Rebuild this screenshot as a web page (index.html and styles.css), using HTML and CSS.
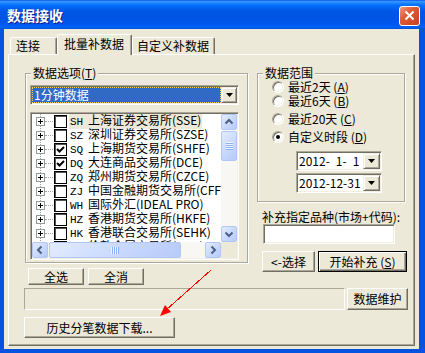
FILE: index.html
```html
<!DOCTYPE html>
<html lang="zh-CN">
<head>
  <meta charset="UTF-8" />
  <title>数据接收</title>
  <link rel="stylesheet" href="styles.css">
</head>
<body>
  <div class="window">
    <div class="titlebar">
      <span class="title">数据接收</span>
      <button class="close">
        <svg width="11" height="11" viewBox="0 0 11 11"><path d="M1.5 1.5 L9.5 9.5 M9.5 1.5 L1.5 9.5" stroke="#fff" stroke-width="2" fill="none"/></svg>
      </button>
    </div>

    <div class="frame">
      <div class="tabs">
        <div class="tab tab-first">连接</div>
        <div class="tab tab-active">批量补数据</div>
        <div class="tab tab-last">自定义补数据</div>
      </div>

      <div class="panel">
        <div class="upper">
          <div class="col-left">
            <div class="group group-options">
              <div class="group-title">数据选项(<u>T</u>)</div>
              <div class="combo">
                <div class="combo-value">1分钟数据</div>
                <div class="drop"><svg width="7" height="4" viewBox="0 0 7 4"><path d="M0 0 H7 L3.5 4 Z" fill="#000"/></svg></div>
              </div>

              <div class="list">
                <div class="tree">
                  <div class="node"><span class="exp"></span><span class="dots"></span><span class="check"></span><span class="label selected"><span class="code">SH</span>上海证券交易所(SSE)</span></div>
                  <div class="node"><span class="exp"></span><span class="dots"></span><span class="check"></span><span class="label"><span class="code">SZ</span>深圳证券交易所(SZSE)</span></div>
                  <div class="node"><span class="exp"></span><span class="dots"></span><span class="check"><svg width="11" height="11" viewBox="0 0 11 11"><path d="M2 5 L4.5 7.5 L9 3" stroke="#000" stroke-width="2" fill="none"/></svg></span><span class="label"><span class="code">SQ</span>上海期货交易所(SHFE)</span></div>
                  <div class="node"><span class="exp"></span><span class="dots"></span><span class="check"><svg width="11" height="11" viewBox="0 0 11 11"><path d="M2 5 L4.5 7.5 L9 3" stroke="#000" stroke-width="2" fill="none"/></svg></span><span class="label"><span class="code">DQ</span>大连商品交易所(DCE)</span></div>
                  <div class="node"><span class="exp"></span><span class="dots"></span><span class="check"></span><span class="label"><span class="code">ZQ</span>郑州期货交易所(CZCE)</span></div>
                  <div class="node"><span class="exp"></span><span class="dots"></span><span class="check"></span><span class="label"><span class="code">ZJ</span>中国金融期货交易所(CFFEX)</span></div>
                  <div class="node"><span class="exp"></span><span class="dots"></span><span class="check"></span><span class="label"><span class="code">WH</span>国际外汇(IDEAL PRO)</span></div>
                  <div class="node"><span class="exp"></span><span class="dots"></span><span class="check"></span><span class="label"><span class="code">HZ</span>香港期货交易所(HKFE)</span></div>
                  <div class="node"><span class="exp"></span><span class="dots"></span><span class="check"></span><span class="label"><span class="code">HK</span>香港联合交易所(SEHK)</span></div>
                  <div class="node"><span class="exp"></span><span class="dots"></span><span class="check"></span><span class="label"><span class="code">LM</span>伦敦金属交易所(LME)</span></div>
                </div>

                <div class="vscroll">
                  <div class="sb-btn"><svg width="14" height="14" viewBox="0 0 14 14"><polyline points="3.5,8.5 7,5 10.5,8.5" /></svg></div>
                  <div class="sb-thumb thumb-v"><span class="grip grip-v"></span></div>
                  <div class="sb-track"></div>
                  <div class="sb-btn"><svg width="14" height="14" viewBox="0 0 14 14"><polyline points="3.5,5.5 7,9 10.5,5.5" /></svg></div>
                </div>
                <div class="hscroll">
                  <div class="sb-btn"><svg width="14" height="14" viewBox="0 0 14 14"><polyline points="8.5,3.5 5,7 8.5,10.5" /></svg></div>
                  <div class="sb-thumb thumb-h"><span class="grip grip-h"></span></div>
                  <div class="sb-track"></div>
                  <div class="sb-btn"><svg width="14" height="14" viewBox="0 0 14 14"><polyline points="5.5,3.5 9,7 5.5,10.5" /></svg></div>
                </div>
                <div class="corner"></div>
              </div>
            </div>

            <div class="btn-row btn-row-left">
              <button class="btn btn-select">全选</button>
              <button class="btn btn-select">全消</button>
            </div>
          </div>

          <div class="col-right">
            <div class="group group-range">
              <div class="group-title">数据范围</div>
              <div class="radio-row"><span class="radio"></span>最近2天 (<u>A</u>)</div>
              <div class="radio-row"><span class="radio"></span>最近6天 (<u>B</u>)</div>
              <div class="radio-row gap"><span class="radio"></span>最近20天 (<u>C</u>)</div>
              <div class="radio-row gap"><span class="radio"><span class="dot"></span></span>自定义时段 (<u>D</u>)</div>

              <div class="date date-first">
                <span class="date-text">2012-<i class="sp"></i>1-<i class="sp"></i>1</span>
                <span class="drop"><svg width="7" height="4" viewBox="0 0 7 4"><path d="M0 0 H7 L3.5 4 Z" fill="#000"/></svg></span>
              </div>
              <div class="date">
                <span class="date-text">2012-12-31</span>
                <span class="drop"><svg width="7" height="4" viewBox="0 0 7 4"><path d="M0 0 H7 L3.5 4 Z" fill="#000"/></svg></span>
              </div>
            </div>

            <div class="field-label">补充指定品种(市场+代码):</div>
            <input class="textbox" type="text" />

            <div class="btn-row btn-row-right">
              <button class="btn btn-pick">&lt;-选择</button>
              <button class="btn btn-default">开始补充 (<u>S</u>)</button>
            </div>
          </div>
        </div>

        <div class="status-row">
          <div class="status"></div>
          <button class="btn btn-maint">数据维护</button>
        </div>

        <button class="btn btn-download">历史分笔数据下载...</button>
      </div>
    </div>

    <svg class="annot" width="425" height="353" viewBox="0 0 425 353">
      <line x1="211" y1="270" x2="166" y2="310" stroke="#ff0000" stroke-width="1" shape-rendering="crispEdges"/>
      <polygon points="160,316 171,312 165,305" fill="#ff0000"/>
    </svg>
  </div>
</body>
</html>
```

FILE: styles.css
```css
* {
  margin: 0;
  padding: 0;
  box-sizing: border-box;
}

body {
  font-family: "Noto Sans CJK SC", "Liberation Sans", sans-serif;
  font-size: 12px;
  line-height: 14px;
  color: #000;
  background: #fff;
}

button,
input {
  font: inherit;
  color: inherit;
}

u {
  text-underline-offset: 1px;
}

.window {
  position: relative;
  width: 425px;
  height: 353px;
  display: flex;
  flex-direction: column;
}

/* title bar */
.titlebar {
  height: 29px;
  flex: none;
  display: flex;
  align-items: center;
  justify-content: space-between;
  padding: 0 5px 0 7px;
  background: linear-gradient(to bottom, #0058ee 0%, #3a93ff 5%, #288eff 9%, #127dff 13%, #036ffc 19%, #0262ee 28%, #0057e5 40%, #0054e3 62%, #0055eb 78%, #005bf5 88%, #0263f6 93%, #0050d8 100%);
}

.title {
  color: #fff;
  font-weight: bold;
  font-size: 14px;
  text-shadow: 1px 1px 0 #0a1e8c;
}

.close {
  width: 21px;
  height: 20px;
  margin-top: 2px;
  border: 1px solid #fff;
  border-radius: 3px;
  background: linear-gradient(135deg, #ee9a7e 0%, #dc5a35 40%, #c8431f 100%);
  display: flex;
  align-items: center;
  justify-content: center;
}

.frame {
  flex: 1;
  border-style: solid;
  border-color: #0553e1;
  border-width: 0 6px 4px 4px;
  background: #ece9d8;
}

/* tabs */
.tabs {
  display: flex;
  align-items: flex-end;
  height: 25px;
  padding-left: 6px;
}

.tab {
  height: 17px;
  padding-top: 1px;
  border: 1px solid;
  border-bottom: none;
  border-color: #fff #716f64 transparent #fff;
  border-radius: 2px 2px 0 0;
  box-shadow: inset -1px 0 0 #aca899;
  background: #ece9d8;
  white-space: nowrap;
}

.tab-first {
  width: 47px;
  padding-left: 5px;
}

.tab-active {
  position: relative;
  z-index: 1;
  width: 75px;
  height: 21px;
  margin-bottom: -1px;
  padding-top: 2px;
  padding-left: 6px;
}

.tab-last {
  width: 83px;
  padding-left: 4px;
}

.panel {
  margin-left: 4px;
  width: 407px;
  height: 292px;
  border: 1px solid;
  border-color: #fff #716f64 #716f64 #fff;
  box-shadow: inset -1px -1px 0 #aca899;
  padding: 18px 0 0 15px;
}

.upper {
  display: flex;
  align-items: flex-start;
}

.col-left {
  width: 224px;
}

.col-right {
  width: 150px;
  margin-left: 9px;
}

/* group boxes */
.group {
  border: 1px solid #aca899;
  box-shadow: inset 1px 1px 0 #fff, 1px 1px 0 #fff;
  padding-left: 4px;
}

.group-title {
  width: fit-content;
  margin: -8px 0 0 1px;
  padding: 0 2px;
  background: #ece9d8;
  white-space: nowrap;
}

.group-options {
  margin-left: 1px;
  width: 223px;
  padding-bottom: 2px;
}

.group-range {
  width: 148px;
  padding-bottom: 8px;
}

/* combo */
.combo {
  display: flex;
  width: 209px;
  height: 20px;
  margin-top: 5px;
  padding: 1px;
  border: 1px solid;
  border-color: #aca899 #fff #fff #aca899;
  box-shadow: inset 1px 1px 0 #716f64, inset -1px -1px 0 #f1efe2;
  background: #fff;
}

.combo-value {
  flex: 1;
  background: #316ac5;
  color: #fff;
  border: 1px dotted #f5d35e;
  padding-left: 1px;
}

.drop {
  width: 16px;
  height: 16px;
  flex: none;
  display: flex;
  align-items: center;
  justify-content: center;
  border: 1px solid;
  border-color: #f1efe2 #716f64 #716f64 #f1efe2;
  box-shadow: inset 1px 1px 0 #fff, inset -1px -1px 0 #aca899;
  background: #ece9d8;
}

/* tree list */
.list {
  display: grid;
  grid-template-columns: 189px 16px;
  grid-template-rows: 128px 16px;
  width: 209px;
  height: 148px;
  margin-top: 7px;
  padding: 1px;
  border: 1px solid;
  border-color: #aca899 #fff #fff #aca899;
  box-shadow: inset 1px 1px 0 #716f64, inset -1px -1px 0 #f1efe2;
  background: #fff;
}

.tree {
  overflow: hidden;
  background-image: repeating-linear-gradient(to bottom, #a0a0a0 0 1px, transparent 1px 2px);
  background-size: 1px 100%;
  background-position: 8px 0;
  background-repeat: no-repeat;
}

.node {
  display: flex;
  align-items: center;
  height: 14px;
  white-space: nowrap;
}

.exp {
  flex: none;
  width: 9px;
  height: 9px;
  margin-left: 4px;
  border: 1px solid #919b9c;
  background:
    linear-gradient(#000, #000) center / 5px 1px no-repeat,
    linear-gradient(#000, #000) center / 1px 5px no-repeat,
    #fff;
}

.dots {
  flex: none;
  width: 8px;
  height: 1px;
  margin-right: 1px;
  border-top: 1px dotted #a0a0a0;
}

.check {
  flex: none;
  width: 13px;
  height: 13px;
  border: 1px solid #000;
  box-shadow: inset 1px 1px 0 #555;
  background: #fff;
}

.check svg {
  display: block;
}

.label {
  margin-left: 2px;
  padding: 0 1px;
  line-height: 14px;
}

.label.selected {
  background: #ece9d8;
}

.code {
  display: inline-block;
  width: 18px;
  font-family: "Liberation Mono", "DejaVu Sans Mono", monospace;
  font-size: 11px;
}

/* scrollbars */
.vscroll,
.hscroll {
  display: flex;
  background: #f8f7f3;
}

.vscroll {
  flex-direction: column;
}

.sb-btn,
.sb-thumb {
  flex: none;
  display: flex;
  align-items: center;
  justify-content: center;
  border: 1px solid #b3c7f2;
  border-radius: 2px;
  background: linear-gradient(135deg, #e3ecfe 0%, #c8d8fd 55%, #b7cbf8 100%);
}

.sb-btn {
  width: 16px;
  height: 16px;
}

.sb-btn polyline {
  fill: none;
  stroke: #4d6185;
  stroke-width: 2;
}

.sb-track {
  flex: 1;
}

.thumb-v {
  width: 16px;
  height: 30px;
  margin-top: 1px;
}

.thumb-h {
  width: 132px;
  height: 16px;
  margin-left: 1px;
}

.grip-v {
  width: 7px;
  height: 8px;
  background: repeating-linear-gradient(to bottom, #eef4fe 0 1px, #8cb0f8 1px 2px);
}

.grip-h {
  width: 8px;
  height: 7px;
  background: repeating-linear-gradient(to right, #eef4fe 0 1px, #8cb0f8 1px 2px);
}

.corner {
  background: #ece9d8;
}

/* radios */
.radio-row {
  display: flex;
  align-items: center;
  height: 14px;
  margin-left: 10px;
  white-space: pre;
}

.radio-row:first-of-type {
  margin-top: 6px;
}

.radio-row.gap {
  margin-top: 4px;
}

.radio {
  flex: none;
  width: 12px;
  height: 12px;
  margin-right: 4px;
  border-radius: 50%;
  border: 1px solid;
  border-color: #aca899 #fff #fff #aca899;
  box-shadow: inset 1px 1px 0 #716f64, inset -1px -1px 0 #f1efe2;
  background: #fff;
  display: flex;
  align-items: center;
  justify-content: center;
}

.dot {
  width: 4px;
  height: 4px;
  border-radius: 50%;
  background: #000;
}

/* date pickers */
.date {
  display: flex;
  align-items: center;
  width: 86px;
  height: 20px;
  margin: 2px 0 0 34px;
  padding: 1px;
  border: 1px solid;
  border-color: #aca899 #fff #fff #aca899;
  box-shadow: inset 1px 1px 0 #716f64, inset -1px -1px 0 #f1efe2;
  background: #fff;
}

.date-first {
  margin-top: 7px;
}

.date-text {
  flex: 1;
  padding-left: 1px;
  white-space: nowrap;
}

.date .drop {
  width: 17px;
}

.sp {
  display: inline-block;
  width: 6px;
}

.field-label {
  margin-top: 8px;
  padding-left: 5px;
  white-space: nowrap;
}

.textbox {
  display: block;
  width: 132px;
  height: 20px;
  margin-left: 6px;
  border: 1px solid;
  border-color: #aca899 #fff #fff #aca899;
  box-shadow: inset 1px 1px 0 #716f64, inset -1px -1px 0 #f1efe2;
  background: #fff;
  outline: none;
}

/* buttons */
.btn {
  display: block;
  flex: none;
  text-align: center;
  white-space: pre;
  background: #ece9d8;
  border: 1px solid;
  border-color: #fff #716f64 #716f64 #fff;
  box-shadow: inset -1px -1px 0 #aca899;
}

.btn-row {
  display: flex;
}

.btn-row-left {
  margin-top: 5px;
  gap: 4px;
  padding-left: 4px;
}

.btn-select {
  width: 56px;
  height: 17px;
}

.btn-row-right {
  margin-top: 7px;
  padding-left: 5px;
  gap: 3px;
}

.btn-pick {
  width: 53px;
  height: 21px;
}

.btn-default {
  width: 89px;
  height: 21px;
  border-color: #000;
  box-shadow: inset 1px 1px 0 #fff, inset -1px -1px 0 #716f64, inset -2px -2px 0 #aca899;
}

.status-row {
  display: flex;
  margin-top: 3px;
  gap: 2px;
}

.status {
  width: 321px;
  height: 22px;
  border: 1px solid;
  border-color: #aca899 #fff #fff #aca899;
}

.btn-maint {
  width: 61px;
  height: 22px;
}

.btn-download {
  width: 151px;
  height: 21px;
  margin-top: 7px;
}

/* red hint arrow drawn over the dialog */
.annot {
  position: absolute;
  left: 0;
  top: 0;
  pointer-events: none;
}
```
